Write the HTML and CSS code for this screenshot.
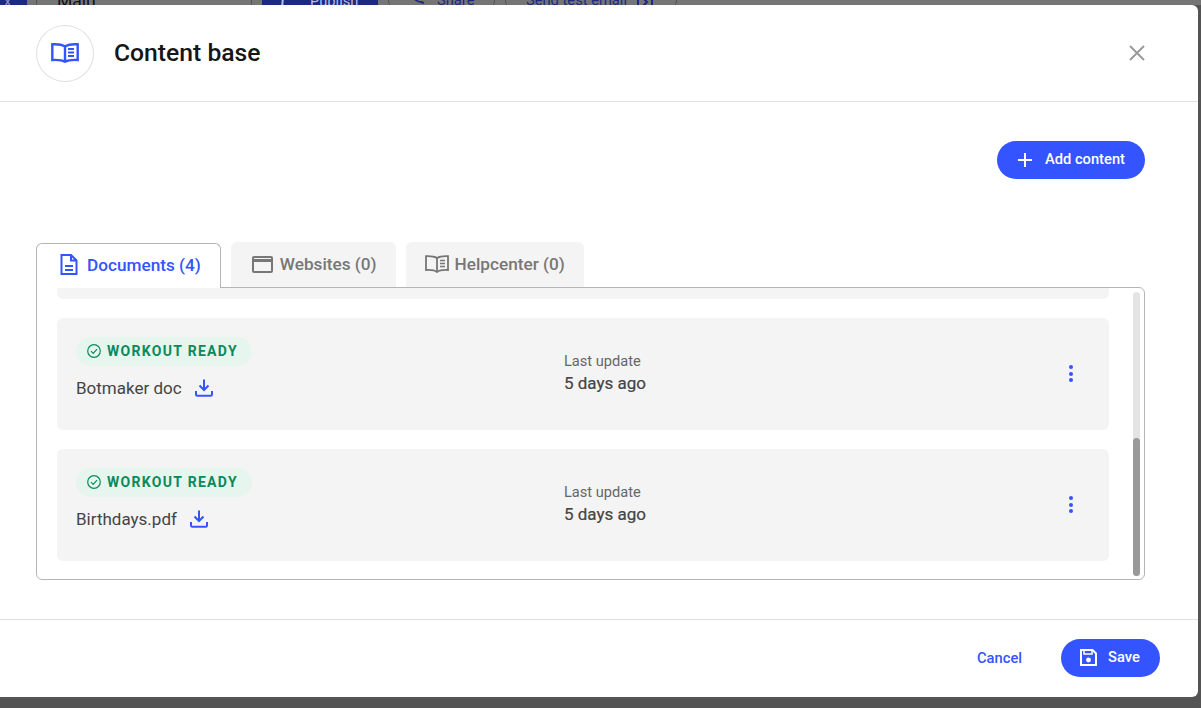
FILE: index.html
```html
<!DOCTYPE html>
<html lang="en">
<head>
<meta charset="utf-8">
<title>Content base</title>
<link rel="stylesheet" href="styles.css">
</head>
<body>
<div class="appbar">
  <span class="app-item app-back">x</span>
  <span class="app-item app-select">Main</span>
  <span class="app-item app-publish">
    <svg width="34" height="20" viewBox="0 0 34 20" fill="none" stroke="#b9bfdf" stroke-width="2"><path d="M8 19L9 8 25 3"/></svg>
    Publish
  </span>
  <span class="app-item app-share">
    <svg width="20" height="20" viewBox="0 0 20 20" fill="none" stroke="#1b2a80" stroke-width="2"><path d="M2 7l11 6 6 2"/></svg>
    Share
  </span>
  <span class="app-item app-test">
    Send test email
    <svg width="16" height="20" viewBox="0 0 16 20" fill="none" stroke="#1b2a80" stroke-width="2"><path d="M1 8v12M15 8v12M6 10l4 4-4 4"/></svg>
  </span>
</div>
<section class="modal">
  <header class="modal-head">
    <span class="head-icon">
      <svg width="28" height="20" viewBox="0 0 28 20" fill="none" stroke="#3354ff" stroke-width="2.400"><path d="M14 3.200C11 1.600 6 1 1.300 1.300V17c4.700-.3 9.700.1 12.700 1.700 3-1.600 8-2 12.700-1.700V1.300C22 1 17 1.600 14 3.200Z"/><path d="M14 3.200v15"/><path d="M17 6h6M17 9.500h6M17 13h6" stroke-width="1.800"/></svg>
    </span>
    <h1 class="modal-title">Content base</h1>
    <svg class="close" width="16" height="16" viewBox="0 0 16 16" stroke="#9a9a9a" stroke-width="2"><path d="M1 1l14 14M15 1L1 15"/></svg>
  </header>
  <div class="modal-body">
    <div class="actions">
      <button class="btn btn-add">
        <svg width="14" height="14" viewBox="0 0 14 14" stroke="#fff" stroke-width="2"><path d="M7 0v14M0 7h14"/></svg>
        Add content
      </button>
    </div>
    <div class="tabs">
      <div class="tab tab-active">
        <svg width="18" height="21" viewBox="0 0 18 21" fill="none" stroke="#3354ff" stroke-width="2"><path d="M1.500 1h9.500l5.500 5.500V20h-15Z"/><path d="M11 1v5.500h5.500"/><path d="M5 12h8M5 16h8"/></svg>
        Documents (4)
      </div>
      <div class="tab">
        <svg width="21" height="17" viewBox="0 0 21 17" fill="none" stroke="#777" stroke-width="2"><rect x="1" y="1" width="19" height="15" rx="1"/><path d="M1 4.500h19" stroke-width="3"/></svg>
        Websites (0)
      </div>
      <div class="tab tab-help">
        <svg width="24" height="18" viewBox="0 0 24 18" fill="none" stroke="#777" stroke-width="1.800"><path d="M12 3C9.500 1.500 5 1 1 1.200V15c4-.2 8.500 0 11 2 2.500-2 7-2.200 11-2V1.200C19 1 14.500 1.500 12 3Z"/><path d="M12 3v14"/><path d="M15 5.500h5M15 8.500h5M15 11.500h5" stroke-width="1.400"/></svg>
        Helpcenter (0)
      </div>
    </div>
    <div class="panel">
      <div class="list">
        <div class="card card-cut"></div>
        <article class="card">
          <div class="card-main">
            <span class="badge">
              <svg width="14" height="14" viewBox="0 0 14 14" fill="none" stroke="#0a8a5a" stroke-width="1.200"><circle cx="7" cy="7" r="6.300"/><path d="M4 7.200l2.200 2.200L10 5.200"/></svg>
              WORKOUT READY
            </span>
            <div class="doc-name">Botmaker doc
              <svg class="dl" width="18" height="18" viewBox="0 0 18 18" fill="none" stroke="#3354ff" stroke-width="2"><path d="M9 0.500v10M4.500 6.500L9 11l4.500-4.500"/><path d="M1 12v3.500c0 .8.500 1.300 1.300 1.300h13.400c.8 0 1.300-.5 1.300-1.300V12"/></svg>
            </div>
          </div>
          <div class="card-date">
            <span class="date-label">Last update</span>
            <span class="date-value">5 days ago</span>
          </div>
          <span class="kebab"><i></i><i></i><i></i></span>
        </article>
        <article class="card">
          <div class="card-main">
            <span class="badge">
              <svg width="14" height="14" viewBox="0 0 14 14" fill="none" stroke="#0a8a5a" stroke-width="1.200"><circle cx="7" cy="7" r="6.300"/><path d="M4 7.200l2.200 2.200L10 5.200"/></svg>
              WORKOUT READY
            </span>
            <div class="doc-name">Birthdays.pdf
              <svg class="dl" width="18" height="18" viewBox="0 0 18 18" fill="none" stroke="#3354ff" stroke-width="2"><path d="M9 0.500v10M4.500 6.500L9 11l4.500-4.500"/><path d="M1 12v3.500c0 .8.500 1.300 1.300 1.300h13.400c.8 0 1.300-.5 1.300-1.300V12"/></svg>
            </div>
          </div>
          <div class="card-date">
            <span class="date-label">Last update</span>
            <span class="date-value">5 days ago</span>
          </div>
          <span class="kebab"><i></i><i></i><i></i></span>
        </article>
      </div>
      <div class="scrollbar"><div class="thumb"></div></div>
    </div>
  </div>
  <footer class="modal-foot">
    <a class="cancel">Cancel</a>
    <button class="btn btn-save">
      <svg width="17" height="17" viewBox="0 0 17 17" fill="none" stroke="#fff" stroke-width="2"><path d="M1 1h11.500L16 4.500V16H1Z"/><path d="M4 1.500v3.500h8V1.500" stroke-width="1.500"/><circle cx="8.500" cy="11" r="2.400" fill="#fff" stroke="none"/></svg>
      Save
    </button>
  </footer>
</section>
</body>
</html>
```

FILE: styles.css
```css
* { box-sizing: border-box; }

html, body {
  margin: 0;
  height: 100%;
}

body {
  position: relative;
  overflow: hidden;
  background: linear-gradient(#757575 0, #757575 5px, #545454 5px);
  font-family: Roboto, "Liberation Sans", sans-serif;
  color: #444;
}

.appbar {
  height: 5px;
  display: flex;
  align-items: flex-end;
  overflow: hidden;
  font-size: 14.700px;
  line-height: 16px;
}

.app-item {
  flex: none;
  height: 24px;
  margin-bottom: -4px;
  display: flex;
  align-items: flex-end;
  color: #1b2a80;
}

.app-back {
  width: 27px;
  padding-left: 4px;
  background: #1b2a80;
  color: #8a93c4;
}

.app-select {
  width: 216px;
  margin-left: 9px;
  padding-left: 20px;
  border-left: 1px solid #555;
  border-right: 1px solid #555;
  color: #111;
  font-size: 17.500px;
}

.app-publish {
  width: 116px;
  margin-left: 10px;
  padding-left: 12px;
  gap: 2px;
  background: #1b2a80;
  color: #b9bfdf;
  border-radius: 5px;
}

.app-share {
  width: 107px;
  margin-left: 10px;
  padding-left: 16px;
  gap: 12px;
  border: 1px solid #555;
  border-radius: 8px;
}

.app-test {
  width: 172px;
  margin-left: 10px;
  padding-left: 20px;
  gap: 10px;
  border: 1px solid #555;
  border-radius: 8px;
}

.modal {
  position: absolute;
  top: 5px;
  left: 0;
  width: 1198px;
  height: 692px;
  display: flex;
  flex-direction: column;
  background: #fff;
  border-radius: 0 6px 6px 0;
}

.modal-head {
  height: 97px;
  flex: none;
  display: flex;
  align-items: center;
  padding: 0 53px 1px 36px;
  border-bottom: 1px solid #e0e0e0;
}

.head-icon {
  width: 58px;
  height: 57px;
  margin-top: 1px;
  display: flex;
  align-items: center;
  justify-content: center;
  border: 1px solid #e0e0e0;
  border-radius: 50%;
}

.modal-title {
  margin: 0 0 0 20px;
  flex: 1;
  font-size: 24.700px;
  font-weight: 500;
  color: #161616;
}

.modal-body {
  flex: 1;
  padding: 39px 53px 0 36px;
}

.actions {
  display: flex;
  justify-content: flex-end;
  height: 101px;
}

.btn {
  display: flex;
  align-items: center;
  border: 0;
  border-radius: 19px;
  height: 38px;
  padding-bottom: 2px;
  background: #3354ff;
  color: #fff;
  font: 500 14.700px/15px Roboto, "Liberation Sans", sans-serif;
}

.btn-add {
  width: 148px;
  padding-left: 21px;
  gap: 13px;
}

.tabs {
  display: flex;
  gap: 10px;
  height: 45px;
  align-items: flex-start;
}

.tab {
  height: 45px;
  display: flex;
  align-items: center;
  gap: 7px;
  padding: 0 19px 1px 21px;
  background: #f4f4f4;
  border-radius: 6px 6px 0 0;
  font-size: 17.200px;
  font-weight: 500;
  color: #777;
}

.tab-help {
  gap: 6px;
  padding-left: 19px;
}

.tab-active {
  position: relative;
  z-index: 1;
  margin-top: 1px;
  gap: 9px;
  padding: 0 19px 3px 23px;
  background: #fff;
  border: 1px solid #b5b5b5;
  border-bottom: 0;
  color: #3354ff;
}

.panel {
  position: relative;
  height: 293px;
  border: 1px solid #b5b5b5;
  border-radius: 0 6px 6px 6px;
  overflow: hidden;
}

.list {
  display: flex;
  flex-direction: column;
  gap: 19px;
  padding: 0 35px 0 20px;
}

.card {
  height: 112px;
  display: flex;
  align-items: flex-start;
  position: relative;
  background: #f4f4f4;
  border-radius: 6px;
  padding: 19px;
}

.card-cut {
  height: 11px;
  border-radius: 0 0 6px 6px;
  padding: 0;
}

.card-main {
  width: 488px;
  flex: none;
}

.badge {
  display: flex;
  align-items: center;
  gap: 6px;
  height: 29px;
  width: 176px;
  padding: 0 0 2px 11px;
  background: #e6f6ef;
  border-radius: 15px;
  font-size: 14px;
  font-weight: 700;
  letter-spacing: 1.300px;
  color: #0a8a5a;
}

.doc-name {
  display: flex;
  align-items: center;
  gap: 13px;
  margin-top: 9px;
  font-size: 17px;
  color: #444;
  line-height: 26px;
}

.card-date {
  display: flex;
  flex-direction: column;
  margin-top: 15px;
}

.date-label {
  font-size: 14.600px;
  line-height: 19px;
  color: #666;
}

.date-value {
  font-size: 17px;
  line-height: 25px;
  color: #444;
  -webkit-text-stroke: .2px #444;
}

.kebab {
  position: absolute;
  right: 36px;
  top: 47px;
  display: flex;
  flex-direction: column;
  gap: 2.500px;
}

.kebab i {
  width: 4px;
  height: 4px;
  border-radius: 50%;
  background: #3354ff;
}

.scrollbar {
  position: absolute;
  top: 4px;
  right: 4px;
  width: 7px;
  height: 284px;
  background: #e4e4e4;
  border-radius: 4px;
}

.thumb {
  position: absolute;
  bottom: 0;
  width: 7px;
  height: 138px;
  background: #999;
  border-radius: 4px;
}

.modal-foot {
  height: 78px;
  flex: none;
  display: flex;
  align-items: center;
  justify-content: flex-end;
  gap: 39px;
  padding: 0 38px 1px 0;
  border-top: 1px solid #e0e0e0;
}

.cancel {
  font-size: 14.700px;
  font-weight: 500;
  color: #3354ff;
}

.btn-save {
  width: 99px;
  padding-left: 19px;
  gap: 11px;
}
```
